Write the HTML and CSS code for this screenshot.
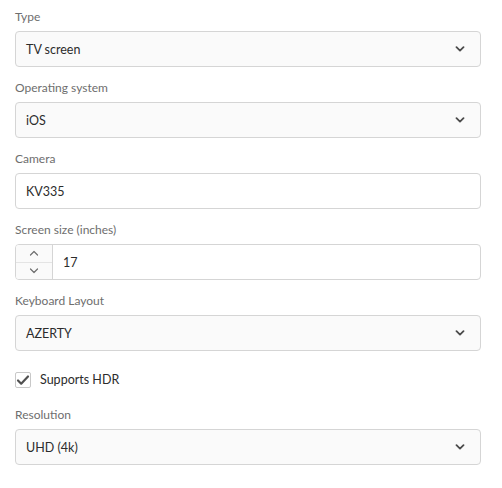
FILE: index.html
```html
<!DOCTYPE html>
<html>
<head>
<meta charset="utf-8">
<link rel="stylesheet" href="styles.css">
</head>
<body>
<form class="form">
  <div class="field">
    <div class="label">Type</div>
    <div class="picker"><span class="value">TV screen</span><svg class="chev" width="10" height="6" viewBox="0 0 10 6"><path d="M1.5 1.2l3.5 3.4 3.5-3.4" fill="none" stroke="#4b4b4b" stroke-width="1.8" stroke-linecap="round" stroke-linejoin="round"/></svg></div>
  </div>
  <div class="field">
    <div class="label">Operating system</div>
    <div class="picker"><span class="value">iOS</span><svg class="chev" width="10" height="6" viewBox="0 0 10 6"><path d="M1.5 1.2l3.5 3.4 3.5-3.4" fill="none" stroke="#4b4b4b" stroke-width="1.8" stroke-linecap="round" stroke-linejoin="round"/></svg></div>
  </div>
  <div class="field">
    <div class="label">Camera</div>
    <div class="textfield"><span class="value">KV335</span></div>
  </div>
  <div class="field">
    <div class="label">Screen size (inches)</div>
    <div class="stepper">
      <div class="buttons">
        <div class="btn"><svg width="10" height="6" viewBox="0 0 10 6"><path d="M1.5 5l3.5-3.5 3.5 3.5" fill="none" stroke="#6e6e6e" stroke-width="1.2" stroke-linecap="round" stroke-linejoin="round"/></svg></div>
        <div class="btn"><svg width="10" height="6" viewBox="0 0 10 6"><path d="M1.5 1l3.5 3.5 3.5-3.5" fill="none" stroke="#6e6e6e" stroke-width="1.2" stroke-linecap="round" stroke-linejoin="round"/></svg></div>
      </div>
      <span class="value num">17</span>
    </div>
  </div>
  <div class="field">
    <div class="label">Keyboard Layout</div>
    <div class="picker"><span class="value">AZERTY</span><svg class="chev" width="10" height="6" viewBox="0 0 10 6"><path d="M1.5 1.2l3.5 3.4 3.5-3.4" fill="none" stroke="#4b4b4b" stroke-width="1.8" stroke-linecap="round" stroke-linejoin="round"/></svg></div>
  </div>
  <label class="check">
    <span class="box"><svg width="14" height="12" viewBox="0 0 14 12"><path d="M2 6.5l3.2 3.2L12 2.5" fill="none" stroke="#505050" stroke-width="2.2" stroke-linecap="round" stroke-linejoin="round"/></svg></span>
    <span class="check-text">Supports HDR</span>
  </label>
  <div class="field">
    <div class="label">Resolution</div>
    <div class="picker"><span class="value">UHD (4k)</span><svg class="chev" width="10" height="6" viewBox="0 0 10 6"><path d="M1.5 1.2l3.5 3.4 3.5-3.4" fill="none" stroke="#4b4b4b" stroke-width="1.8" stroke-linecap="round" stroke-linejoin="round"/></svg></div>
  </div>
</form>
</body>
</html>
```
FILE: styles.css
```css
html, body {
  margin: 0;
  padding: 0;
  background: #ffffff;
}
body {
  font-family: "Lato", "Noto Sans", sans-serif;
  color: #2c2c2c;
}
.form {
  display: flex;
  flex-direction: column;
  gap: 12px;
  padding: 8px 21px 0 15px;
}
.field {
  display: flex;
  flex-direction: column;
  gap: 5px;
}
.label {
  height: 18px;
  line-height: 18px;
  font-size: 12px;
  color: #6e6e6e;
}
.picker, .textfield, .stepper {
  height: 36px;
  box-sizing: border-box;
  border: 1px solid #d5d5d5;
  border-radius: 4px;
  display: flex;
  align-items: center;
}
.picker {
  background: #fafafa;
  padding: 0 15px 0 10px;
  justify-content: space-between;
}
.textfield {
  background: #ffffff;
  padding: 0 10px;
}
.value {
  font-size: 12.5px;
  color: #2c2c2c;
}
.stepper {
  background: #ffffff;
}
.buttons {
  width: 36px;
  height: 100%;
  display: flex;
  flex-direction: column;
  border-right: 1px solid #d5d5d5;
  background: #fafafa;
  border-radius: 3px 0 0 3px;
}
.btn {
  flex: 1;
  display: flex;
  align-items: center;
  justify-content: center;
}
.btn + .btn {
  border-top: 1px solid #e4e4e4;
}
.num {
  padding-left: 10px;
}
.check {
  height: 31px;
  display: flex;
  align-items: center;
  gap: 9px;
  padding-top: 1px;
  margin-bottom: -1px;
}
.box {
  width: 16px;
  height: 16px;
  box-sizing: border-box;
  border: 1px solid #c8c8c8;
  border-radius: 2px;
  display: flex;
  align-items: center;
  justify-content: center;
}
.check-text {
  font-size: 12.5px;
  color: #2c2c2c;
}
```
